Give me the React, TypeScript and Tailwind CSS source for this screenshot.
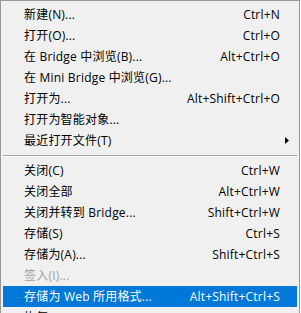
import React from "react";

type Item =
  | { sep: true }
  | { label: string; shortcut?: string; sub?: boolean; disabled?: boolean; active?: boolean };

const items: Item[] = [
  { label: "新建(N)...", shortcut: "Ctrl+N" },
  { label: "打开(O)...", shortcut: "Ctrl+O" },
  { label: "在 Bridge 中浏览(B)...", shortcut: "Alt+Ctrl+O" },
  { label: "在 Mini Bridge 中浏览(G)..." },
  { label: "打开为...", shortcut: "Alt+Shift+Ctrl+O" },
  { label: "打开为智能对象..." },
  { label: "最近打开文件(T)", sub: true },
  { sep: true },
  { label: "关闭(C)", shortcut: "Ctrl+W" },
  { label: "关闭全部", shortcut: "Alt+Ctrl+W" },
  { label: "关闭并转到 Bridge...", shortcut: "Shift+Ctrl+W" },
  { label: "存储(S)", shortcut: "Ctrl+S" },
  { label: "存储为(A)...", shortcut: "Shift+Ctrl+S" },
  { label: "签入(I)...", disabled: true },
  { label: "存储为 Web 所用格式...", shortcut: "Alt+Shift+Ctrl+S", active: true },
  { label: "恢复(V)", shortcut: "F12" },
];

export default function App() {
  return (
    <div className="w-[301px] h-[313px] overflow-hidden bg-white">
      <div className="w-[300px] border-l border-t border-r border-[#979797] bg-[#f0f0f0] pt-[3px] px-[1px] font-['Open_Sans','Noto_Sans_CJK_SC',sans-serif] text-[12px] tracking-[0.2px] leading-none text-[#000]">
        {items.map((it, i) => {
          if ("sep" in it) {
            return (
              <div key={i} className="h-[9px] flex flex-col justify-center px-[1px]">
                <div className="h-[1px] bg-[#a0a0a0]" />
                <div className="h-[1px] bg-white" />
              </div>
            );
          }
          return (
            <div
              key={i}
              className={
                "h-[21px] flex items-center justify-between pl-[21px] pr-[17px] mx-[1px] " +
                (it.active ? "bg-[#0078d7] text-white" : "") +
                (it.disabled ? " text-[#a0a0a0]" : "")
              }
            >
              <span className="whitespace-nowrap">{it.label}</span>
              {it.shortcut && <span className="whitespace-nowrap">{it.shortcut}</span>}
              {it.sub && (
                <svg width="4" height="7" viewBox="0 0 4 7" className="mr-[-9px]">
                  <path d="M0 0 L4 3.5 L0 7 Z" fill="#000" />
                </svg>
              )}
            </div>
          );
        })}
      </div>
    </div>
  );
}
